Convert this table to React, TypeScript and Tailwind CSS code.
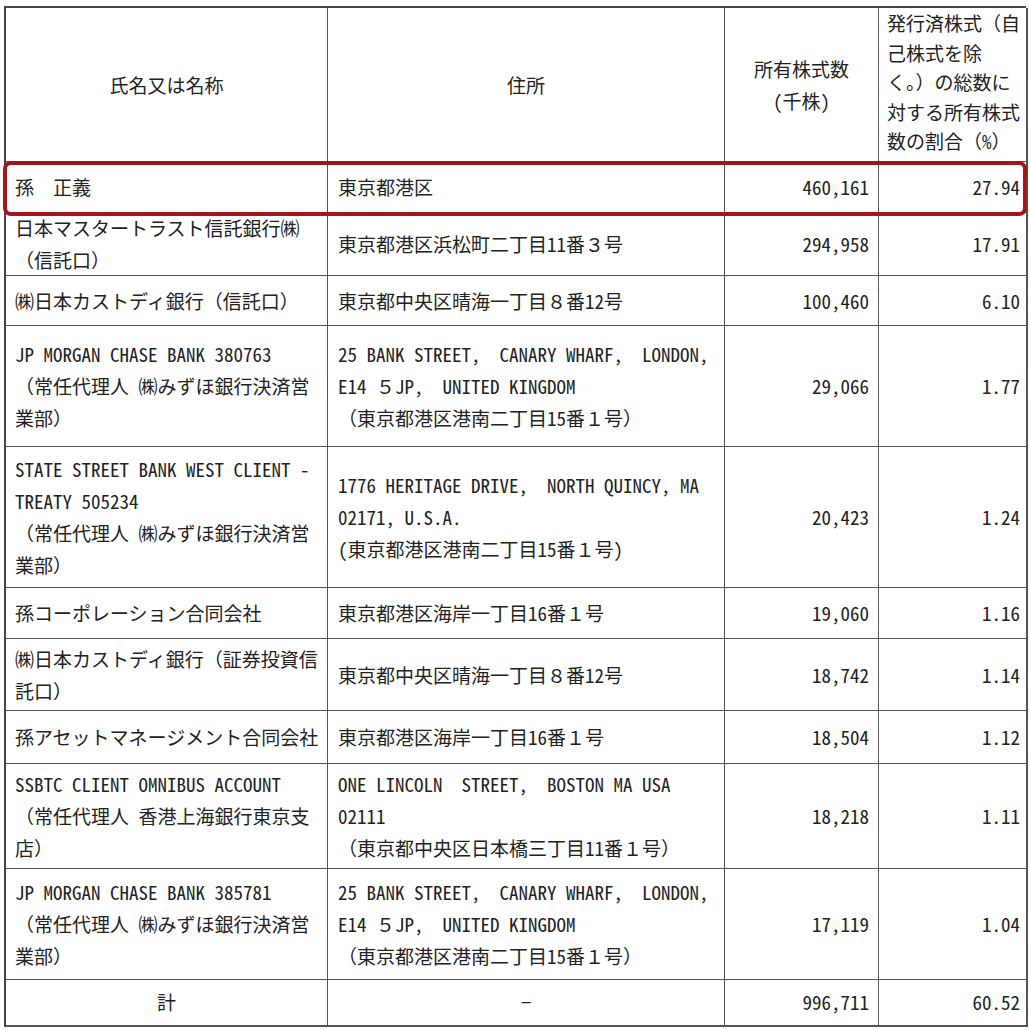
import React from "react";

type Row = {
  name: string[];
  addr: string[];
  shares: string;
  pct: string;
};

const rows: Row[] = [
  { name: ["孫　正義"], addr: ["東京都港区"], shares: "460,161", pct: "27.94" },
  {
    name: ["日本マスタートラスト信託銀行㈱", "（信託口）"],
    addr: ["東京都港区浜松町二丁目11番３号"],
    shares: "294,958",
    pct: "17.91",
  },
  {
    name: ["㈱日本カストディ銀行（信託口）"],
    addr: ["東京都中央区晴海一丁目８番12号"],
    shares: "100,460",
    pct: "6.10",
  },
  {
    name: ["JP MORGAN CHASE BANK 380763", "（常任代理人 ㈱みずほ銀行決済営", "業部）"],
    addr: ["25 BANK STREET,　CANARY WHARF,　LONDON,", "E14 ５JP,　UNITED KINGDOM", "（東京都港区港南二丁目15番１号）"],
    shares: "29,066",
    pct: "1.77",
  },
  {
    name: ["STATE STREET BANK WEST CLIENT -", "TREATY 505234", "（常任代理人 ㈱みずほ銀行決済営", "業部）"],
    addr: ["1776 HERITAGE DRIVE,　NORTH QUINCY, MA", "02171, U.S.A.", "(東京都港区港南二丁目15番１号)"],
    shares: "20,423",
    pct: "1.24",
  },
  {
    name: ["孫コーポレーション合同会社"],
    addr: ["東京都港区海岸一丁目16番１号"],
    shares: "19,060",
    pct: "1.16",
  },
  {
    name: ["㈱日本カストディ銀行（証券投資信", "託口）"],
    addr: ["東京都中央区晴海一丁目８番12号"],
    shares: "18,742",
    pct: "1.14",
  },
  {
    name: ["孫アセットマネージメント合同会社"],
    addr: ["東京都港区海岸一丁目16番１号"],
    shares: "18,504",
    pct: "1.12",
  },
  {
    name: ["SSBTC CLIENT OMNIBUS ACCOUNT", "（常任代理人 香港上海銀行東京支", "店）"],
    addr: ["ONE LINCOLN　STREET,　BOSTON MA USA", "02111", "（東京都中央区日本橋三丁目11番１号）"],
    shares: "18,218",
    pct: "1.11",
  },
  {
    name: ["JP MORGAN CHASE BANK 385781", "（常任代理人 ㈱みずほ銀行決済営", "業部）"],
    addr: ["25 BANK STREET,　CANARY WHARF,　LONDON,", "E14 ５JP,　UNITED KINGDOM", "（東京都港区港南二丁目15番１号）"],
    shares: "17,119",
    pct: "1.04",
  },
];

// Render ASCII runs with half-width glyphs, leave full-width characters as they are.
function T({ s }: { s: string }) {
  const parts = s.split(/([\x20-\x7E]+)/).filter((p) => p.length > 0);
  return (
    <>
      {parts.map((p, i) =>
        /^[\x20-\x7E]+$/.test(p) ? (
          <span key={i} className="[font-feature-settings:'hwid']">
            {p}
          </span>
        ) : (
          <span key={i}>{p}</span>
        )
      )}
    </>
  );
}

function Lines({ lines }: { lines: string[] }) {
  return (
    <>
      {lines.map((l, i) => (
        <div key={i} className="whitespace-pre">
          <T s={l} />
        </div>
      ))}
    </>
  );
}

const cellBase = "flex flex-col justify-center border-r border-b border-[#555555] leading-[32px]";

export default function App() {
  return (
    <div className="min-h-[1030px] bg-white pl-[4px] pt-[6px] text-[19px] text-[#222222] [font-family:'Noto_Sans_CJK_JP','Noto_Sans_CJK_SC',sans-serif]">
      <div className="relative w-[1022px]">
        <div className="grid grid-cols-[322px_397px_154px_149px] grid-rows-[154px_51px_63px_50px_121px_141px_51px_72px_53px_105px_111px_47px] border-l-2 border-t-2 border-[#444444]">
          {/* header */}
          <div className={`${cellBase} items-center`}>氏名又は名称</div>
          <div className={`${cellBase} items-center`}>住所</div>
          <div className={`${cellBase} items-center leading-[27px]`}>
            <div>所有株式数</div>
            <div>
              <T s="(" />千株<T s=")" />
            </div>
          </div>
          <div className="flex flex-col justify-start border-r-2 border-b border-[#555555] pl-[8px] pt-[0px] leading-[29.5px] whitespace-nowrap">
            <div>発行済株式（自</div>
            <div>己株式を除</div>
            <div>く。）の総数に</div>
            <div>対する所有株式</div>
            <div>
              数の割合（<T s="%" />）
            </div>
          </div>

          {rows.map((r, i) => (
            <React.Fragment key={i}>
              <div className={`${cellBase} pl-[9px]`}>
                <Lines lines={r.name} />
              </div>
              <div className={`${cellBase} pl-[10px]`}>
                <Lines lines={r.addr} />
              </div>
              <div className={`${cellBase} items-end pr-[9px]`}>
                <T s={r.shares} />
              </div>
              <div className="flex flex-col justify-center items-end border-r-2 border-b border-[#555555] pr-[6px] leading-[32px]">
                <T s={r.pct} />
              </div>
            </React.Fragment>
          ))}

          {/* total */}
          <div className="flex items-center justify-center border-r border-b-2 border-[#555555]">計</div>
          <div className="flex items-center justify-center border-r border-b-2 border-[#555555]">−</div>
          <div className="flex items-center justify-end border-r border-b-2 border-[#555555] pr-[9px]">
            <T s="996,711" />
          </div>
          <div className="flex items-center justify-end border-r-2 border-b-2 border-[#555555] pr-[6px]">
            <T s="60.52" />
          </div>
        </div>

        {/* highlight frame */}
        <div className="pointer-events-none absolute left-[-1px] top-[155px] h-[55px] w-[1024px] rounded-[8px] border-[4px] border-[#a3161c]" />
      </div>
    </div>
  );
}
